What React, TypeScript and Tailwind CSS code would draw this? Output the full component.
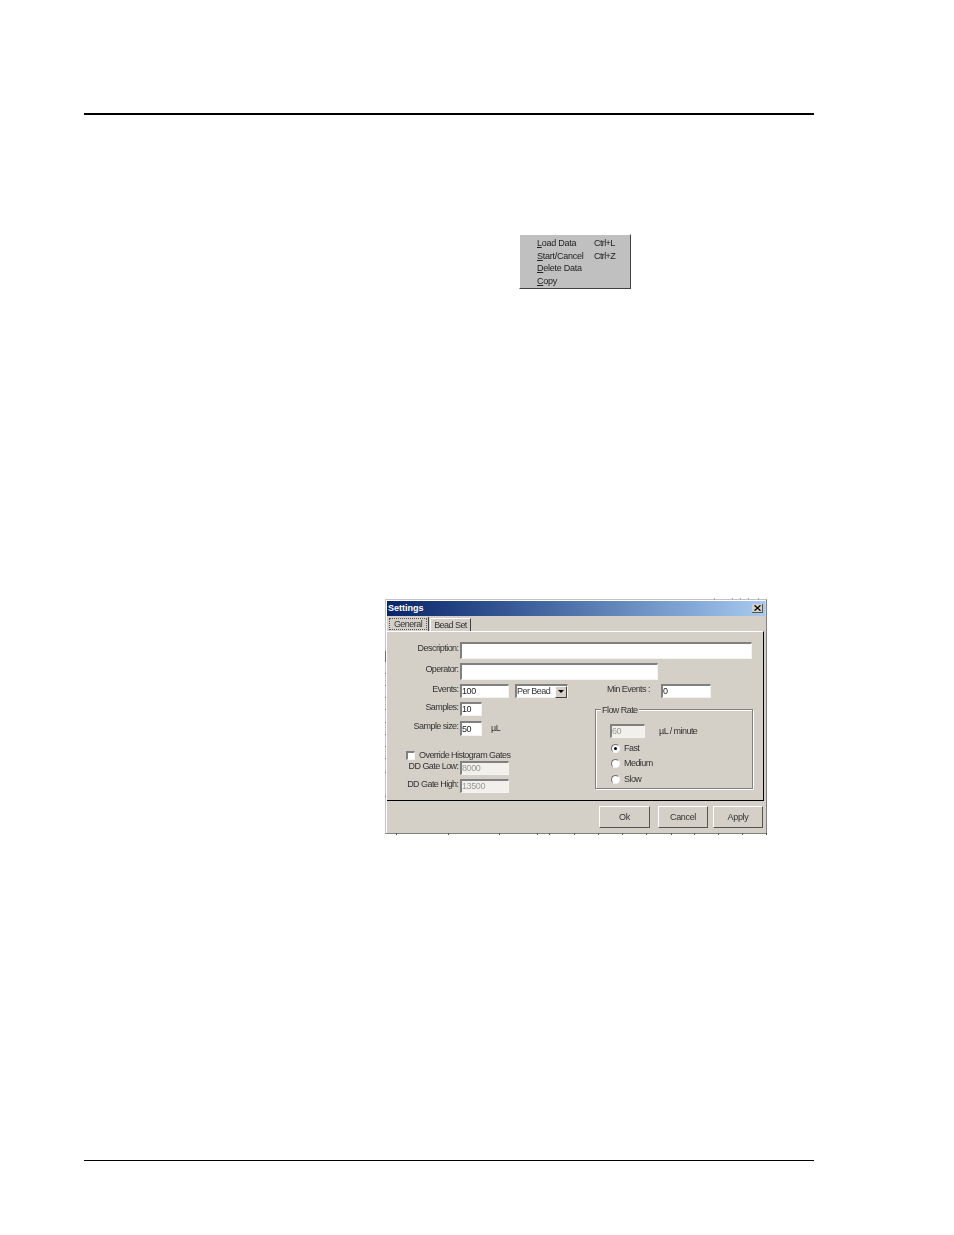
import type { ReactNode } from 'react';

const sunken = 'border-t-2 border-l-2 border-t-[#808080] border-l-[#808080] border-b border-r border-b-[#f4f3f0] border-r-[#f4f3f0]';
const raised = 'border-t border-l border-t-white border-l-white border-b border-r border-b-[#404040] border-r-[#404040]';
const small = 'text-[9px] leading-none tracking-[-0.55px]';

// leftovers of the chart behind the dialog, poking out round its edges
const bottomTicks = [10, 62, 113, 151, 163, 188, 212, 236, 260, 285, 308, 332, 356, 380];
const leftTicks = [73, 85, 97, 109, 122, 134, 146, 158, 172, 196];
const topTicks = [328, 346, 354, 362, 372];

function Input({ value, className, disabled }: { value?: string; className: string; disabled?: boolean }) {
	return (
		<div
			className={`${sunken} ${className} flex items-center text-[9px] leading-none tracking-[-0.4px] ${
				disabled ? 'bg-[#f1f0ec] text-[#9a9a96]' : 'bg-white text-[#222]'
			}`}
		>
			{value}
		</div>
	);
}

function Label({ children }: { children: ReactNode }) {
	return <span className={`${small} mb-[4px] w-[72px] shrink-0 pr-[0.5px] text-right`}>{children}</span>;
}

function Radio({ label, checked, className }: { label: string; checked?: boolean; className?: string }) {
	return (
		<div className={`flex h-[9px] items-center ${className ?? ''}`}>
			<span className="flex size-[9px] items-center justify-center rounded-full border border-t-[#6f6f6b] border-l-[#6f6f6b] border-b-[#f4f3f0] border-r-[#f4f3f0] bg-white">
				{checked && <span className="size-[3px] rounded-full bg-black" />}
			</span>
			<span className={`${small} ml-[4px]`}>{label}</span>
		</div>
	);
}

function Button({ label, className }: { label: string; className: string }) {
	return (
		<div className={`${className} flex h-[22px] items-center justify-center border border-t-white border-l-white border-b-[#55554f] border-r-[#55554f] text-[9px] leading-none tracking-[-0.35px]`}>
			{label}
		</div>
	);
}

function ContextMenu() {
	const rows: [string, string, string][] = [
		['L', 'oad Data', 'Ctrl+L'],
		['S', 'tart/Cancel', 'Ctrl+Z'],
		['D', 'elete Data', ''],
		['C', 'opy', ''],
	];
	return (
		<div className={`${raised} ml-[435px] mt-[119px] h-[55px] w-[112px] bg-[#c0c0c0] pl-[17px] pt-[2px] text-[#222] blur-[0.25px]`}>
			{rows.map(([key, rest, shortcut]) => (
				<div key={key} className="flex h-[12.75px] items-center text-[9px] leading-none">
					<span className="w-[57px] tracking-[-0.25px]">
						<span className="underline">{key}</span>
						{rest}
					</span>
					<span className="tracking-[-0.6px]">{shortcut}</span>
				</div>
			))}
		</div>
	);
}

function SettingsDialog() {
	return (
		<div className="relative ml-[301px] mt-[310px] h-[235px] w-[382px] border border-[#c4c2bc] border-r-[#808080] border-b-[#808080] bg-[#d4d0c8] px-[1px] pt-[1px] text-[#333] shadow-[inset_1px_1px_0_#fff] blur-[0.25px]">
			{bottomTicks.map((x) => (
				<span key={x} className="absolute -bottom-[2px] h-[2px] w-px bg-[#555]" style={{ left: x }} />
			))}
			{leftTicks.map((y) => (
				<span key={y} className="absolute -left-px h-px w-px bg-[#777]" style={{ top: y }} />
			))}
			{topTicks.map((x) => (
				<span key={x} className="absolute -top-[2px] h-[2px] w-px bg-[#aaa]" style={{ left: x }} />
			))}
			<span className="absolute -left-px top-[51px] h-[11px] w-px bg-[#4a6fc0]" />

			<div className="flex h-[15px] items-center justify-between bg-gradient-to-r from-[#0a246a] to-[#a6caf0] pl-[1px] pr-[2px]">
				<span className="text-[9px] font-bold leading-none text-white">Settings</span>
				<span className="flex h-[9px] w-[11px] items-center justify-center border-b border-r border-b-[#55554f] border-r-[#55554f] bg-[#d4d0c8]">
					<svg width="7" height="6" viewBox="0 0 7 6">
						<path d="M0.5 0.3L6.5 5.7M6.5 0.3L0.5 5.7" stroke="#000" strokeWidth="1.3" />
					</svg>
				</span>
			</div>

			<div className="ml-[1px] mt-[1px] flex h-[14px] items-stretch">
				<div className="flex w-[41px] border-r border-r-[#404040] p-[1px]">
					<span className={`${small} flex flex-1 items-center justify-center border border-dotted border-[#555] pt-[1px]`}>General</span>
				</div>
				<div className={`${small} ml-[1px] mt-[1px] flex w-[41px] items-center justify-center border-l border-t border-r border-l-white border-t-white border-r-[#404040] pt-[1px]`}>
					Bead Set
				</div>
			</div>

			<div className="h-[170px] w-[377px] border-t border-r border-b border-t-white border-r-black border-b-black pt-[10px]">
				<div className="flex items-center">
					<Label>Description:</Label>
					<Input className="ml-[1px] h-[17px] w-[292px]" />
				</div>
				<div className="mt-[4px] flex items-center">
					<Label>Operator:</Label>
					<Input className="ml-[1px] h-[17px] w-[198px]" />
				</div>
				<div className="mt-[4px] flex">
					<div className="w-[208px]">
						<div className="flex items-center">
							<Label>Events:</Label>
							<Input value="100" className="ml-[1px] h-[14px] w-[49px]" />
							<div className={`${sunken} ${small} ml-[6px] flex h-[14px] w-[53px] items-center justify-between bg-white`}>
								Per Bead
								<span className={`${raised} flex h-[12px] w-[12px] items-center justify-center bg-[#d4d0c8]`}>
									<span className="border-x-[3px] border-t-[3px] border-x-transparent border-t-black" />
								</span>
							</div>
						</div>
						<div className="mt-[4px] flex items-center">
							<Label>Samples:</Label>
							<Input value="10" className="ml-[1px] h-[14px] w-[22px]" />
						</div>
						<div className="mt-[5px] flex items-center">
							<Label>Sample size:</Label>
							<Input value="50" className="ml-[1px] h-[15px] w-[22px]" />
							<span className={`${small} ml-[9px]`}>µL</span>
						</div>
						<div className="ml-[19px] mt-[15px] flex h-[9px] items-center">
							<span className={`${sunken} size-[9px] bg-white`} />
							<span className={`${small} ml-[4px] whitespace-nowrap`}>Override Histogram Gates</span>
						</div>
						<div className="mt-[1px] flex items-center">
							<Label>DD Gate Low:</Label>
							<Input disabled value="8000" className="ml-[1px] h-[14px] w-[49px]" />
						</div>
						<div className="mt-[4px] flex items-center">
							<Label>DD Gate High:</Label>
							<Input disabled value="13500" className="ml-[1px] h-[14px] w-[49px]" />
						</div>
					</div>

					<div className="w-[158px]">
						<div className="flex items-center">
							<span className={`${small} mb-[4px] ml-[12px] w-[54px]`}>Min Events :</span>
							<Input value="0" className="h-[14px] w-[50px]" />
						</div>
						<div className="relative mt-[11px] h-[80px] w-[158px] border border-[#808080] pl-[14px] pt-[14px] shadow-[inset_1px_1px_0_#fff,1px_1px_0_#fff]">
							<span className={`${small} absolute -top-[4px] left-[5px] bg-[#d4d0c8] px-[1px]`}>Flow Rate</span>
							<div className="flex items-center">
								<Input disabled value="60" className="h-[14px] w-[35px]" />
								<span className={`${small} ml-[14px]`}>µL / minute</span>
							</div>
							<Radio checked label="Fast" className="ml-[1px] mt-[6px]" />
							<Radio label="Medium" className="ml-[1px] mt-[6px]" />
							<Radio label="Slow" className="ml-[1px] mt-[7px]" />
						</div>
					</div>
				</div>
			</div>

			<div className="mr-[2px] mt-[5px] flex justify-end">
				<Button label="Ok" className="w-[51px]" />
				<Button label="Cancel" className="ml-[8px] w-[50px]" />
				<Button label="Apply" className="ml-[5px] w-[50px]" />
			</div>
		</div>
	);
}

export default function App() {
	return (
		<div className="h-[1235px] w-[954px] overflow-hidden bg-white pl-[84px] pt-[113px] font-['Liberation_Sans',Arial,sans-serif]">
			<div className="h-[2px] w-[730px] bg-black" />
			<ContextMenu />
			<SettingsDialog />
			<div className="mt-[326px] h-px w-[730px] bg-black" />
		</div>
	);
}
